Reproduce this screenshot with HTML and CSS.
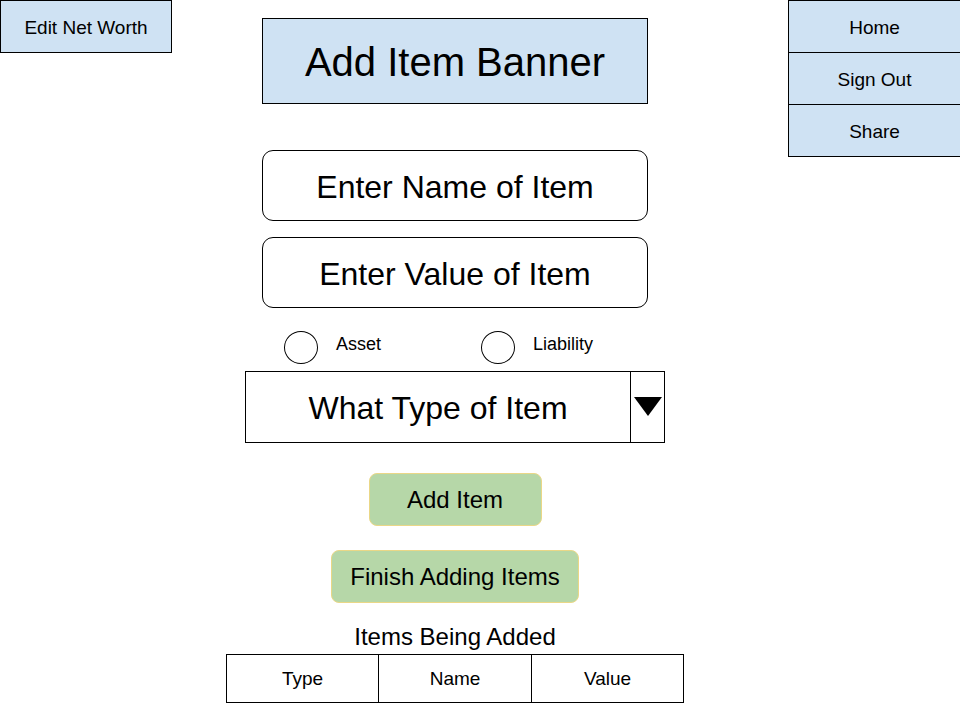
FILE: index.html
```html
<!DOCTYPE html>
<html lang="en">

<head>
    <meta charset="UTF-8">
    <meta name="viewport" content="width=device-width, initial-scale=1.0">
    <link rel="stylesheet" href="styles.css">
    <title>Add Item</title>
</head>

<body>
    <div class="leftNav">
        <div class="navBtn">Edit Net Worth</div>
    </div>

    <div class="main">
        <div class="banner">Add Item Banner</div>

        <div class="field first">Enter Name of Item</div>
        <div class="field">Enter Value of Item</div>

        <div class="radioRow">
            <div class="option">
                <span class="circle"></span>
                <span>Asset</span>
            </div>
            <div class="option">
                <span class="circle"></span>
                <span>Liability</span>
            </div>
        </div>

        <div class="dropdown">
            <div class="ddText">What Type of Item</div>
            <div class="ddArrow">
                <svg width="28" height="20" viewBox="0 0 28 20">
                    <polygon points="0,0 28,0 14,19" fill="#000" />
                </svg>
            </div>
        </div>

        <div class="greenBtn addBtn">Add Item</div>
        <div class="greenBtn finishBtn">Finish Adding Items</div>

        <div class="tableTitle">Items Being Added</div>
        <div class="itemTable">
            <div class="cell">Type</div>
            <div class="cell">Name</div>
            <div class="cell">Value</div>
        </div>
    </div>

    <div class="rightNav">
        <div class="navBtn">Home</div>
        <div class="navBtn">Sign Out</div>
        <div class="navBtn">Share</div>
    </div>
</body>

</html>
```

FILE: styles.css
```css
* {
    box-sizing: border-box;
}

body {
    margin: 0;
    display: flex;
    align-items: flex-start;
    font-family: "Liberation Sans", Arial, sans-serif;
    color: #000;
    background: #fff;
}

.navBtn {
    display: flex;
    align-items: center;
    justify-content: center;
    background: #cfe2f3;
    border: 1px solid #000;
    font-size: 19px;
    padding-top: 2px;
}

.leftNav {
    width: 172px;
}

.leftNav .navBtn {
    height: 53px;
}

.rightNav {
    width: 173px;
    margin-left: auto;
    margin-right: -1px;
}

.rightNav .navBtn {
    height: 53px;
    margin-top: -1px;
}

.rightNav .navBtn:first-child {
    margin-top: 0;
}

.main {
    width: 458px;
    margin-left: 54px;
    display: flex;
    flex-direction: column;
    align-items: center;
}

.banner {
    width: 386px;
    height: 86px;
    margin-top: 18px;
    background: #cfe2f3;
    border: 1px solid #000;
    display: flex;
    align-items: center;
    justify-content: center;
    font-size: 40px;
    padding-top: 2px;
}

.field {
    width: 386px;
    height: 71px;
    margin-top: 16px;
    border: 1px solid #000;
    border-radius: 11px;
    display: flex;
    align-items: center;
    justify-content: center;
    font-size: 32px;
    padding-top: 3px;
}

.field.first {
    margin-top: 46px;
}

.radioRow {
    align-self: stretch;
    display: flex;
    padding-left: 58px;
    margin-top: 23px;
}

.option {
    width: 197px;
    display: flex;
    align-items: flex-start;
    gap: 18px;
    font-size: 18px;
}

.option span:last-child {
    margin-top: 3px;
}

.circle {
    width: 34px;
    height: 33px;
    border: 1px solid #000;
    border-radius: 50%;
}

.dropdown {
    width: 420px;
    height: 72px;
    margin-top: 7px;
    border: 1px solid #000;
    display: flex;
}

.ddText {
    flex: 1;
    display: flex;
    align-items: center;
    justify-content: center;
    font-size: 32px;
    border-right: 1px solid #000;
    padding-top: 2px;
}

.ddArrow {
    width: 33px;
    display: flex;
    justify-content: center;
    padding-top: 25px;
}

.greenBtn {
    display: flex;
    align-items: center;
    justify-content: center;
    background: #b6d7a8;
    border: 1px solid #ead787;
    border-radius: 8px;
    font-size: 24px;
    height: 53px;
}

.addBtn {
    width: 173px;
    margin-top: 30px;
}

.finishBtn {
    width: 248px;
    margin-top: 24px;
}

.tableTitle {
    font-size: 24px;
    margin-top: 20px;
    line-height: 27px;
}

.itemTable {
    width: 458px;
    height: 49px;
    margin-top: 4px;
    border: 1px solid #000;
    display: grid;
    grid-template-columns: 152px 153px 1fr;
}

.cell {
    display: flex;
    align-items: center;
    justify-content: center;
    font-size: 19px;
    border-right: 1px solid #000;
    padding-top: 1px;
}

.cell:last-child {
    border-right: none;
}
```
